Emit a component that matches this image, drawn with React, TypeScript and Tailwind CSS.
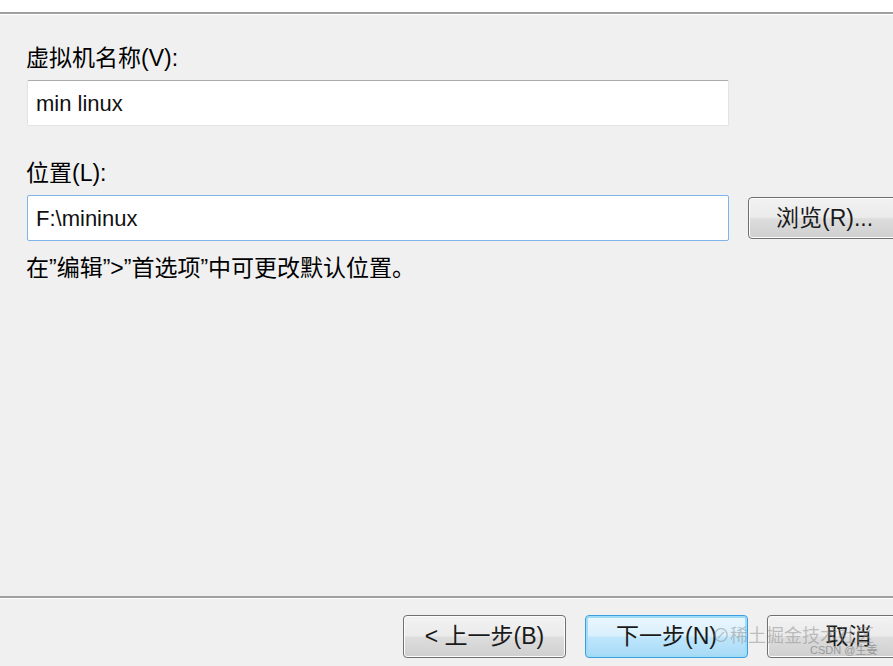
const font = "font-['Liberation_Sans','Noto_Sans_CJK_SC',sans-serif]";

const WinButton = ({ label, primary }: { label: string; primary?: boolean }) => (
  <button
    className={`h-[43px] w-[163px] shrink-0 rounded-[4px] border text-[23px] text-[#1a1a1a] ${
      primary
        ? "border-[#3c9ee0] bg-[linear-gradient(#eaf6fd_0%,#d9f0fc_48%,#bee6fd_52%,#a7d9f5_100%)] shadow-[inset_0_0_0_2px_#9fdcf8]"
        : "border-[#707070] bg-[linear-gradient(#f2f2f2_0%,#ebebeb_48%,#dddddd_52%,#cfcfcf_100%)] shadow-[inset_0_0_0_1px_#fcfcfc]"
    }`}
  >
    {label}
  </button>
);

export default function App() {
  return (
    <div className={`relative h-[666px] w-[893px] overflow-hidden bg-[#f0f0f0] ${font}`}>
      <div className="h-[12px] bg-white" />
      <div className="h-[2px] bg-[#a0a0a0]" />
      <div className="h-[1px] bg-white" />

      <div className="h-[581px] px-[26px] pt-[28px]">
        <div className="text-[23px] leading-[30px] text-black">虚拟机名称(V):</div>
        <div className="mt-[7px] ml-[1px] flex h-[46px] w-[702px] items-center rounded-[2px] border border-[#e3e3e3] border-t-[#ababab] bg-white px-[8px] text-[22px] text-[#111]">
          min linux
        </div>

        <div className="mt-[32px] text-[23px] leading-[30px] text-black">位置(L):</div>
        <div className="mt-[7px] ml-[1px] flex w-[880px] items-center">
          <div className="flex h-[46px] w-[702px] shrink-0 items-center rounded-[2px] border border-[#7eb4ea] bg-white px-[8px] text-[22px] text-[#111]">
            F:\mininux
          </div>
          <button className="ml-[19px] h-[42px] w-[160px] shrink-0 whitespace-nowrap rounded-[4px] border border-[#707070] bg-[linear-gradient(#f2f2f2_0%,#ebebeb_48%,#dddddd_52%,#cfcfcf_100%)] pl-[27px] text-left text-[23px] text-[#1a1a1a] shadow-[inset_0_0_0_1px_#fcfcfc]">
            浏览(R)...
          </button>
        </div>

        <div className="mt-[12px] text-[23px] leading-[30px] text-black">在”编辑”&gt;”首选项”中可更改默认位置。</div>
      </div>

      <div className="h-[2px] bg-[#a0a0a0]" />
      <div className="h-[1px] bg-white" />

      <div className="flex w-[1100px] gap-[19px] pl-[403px] pt-[16px]">
        <WinButton label="< 上一步(B)" />
        <WinButton label="下一步(N)" primary />
        <WinButton label="取消" />
      </div>

      <div className="pointer-events-none absolute left-[712px] top-[624px] whitespace-nowrap text-[18px] leading-[24px] text-[#8a8a8a]/50">
        ⊘稀土掘金技术社区
      </div>
      <div className="pointer-events-none absolute left-[810px] top-[644px] whitespace-nowrap text-[11px] leading-[13px] text-[#9a9a9a]">
        CSDN @生姜
      </div>
    </div>
  );
}
